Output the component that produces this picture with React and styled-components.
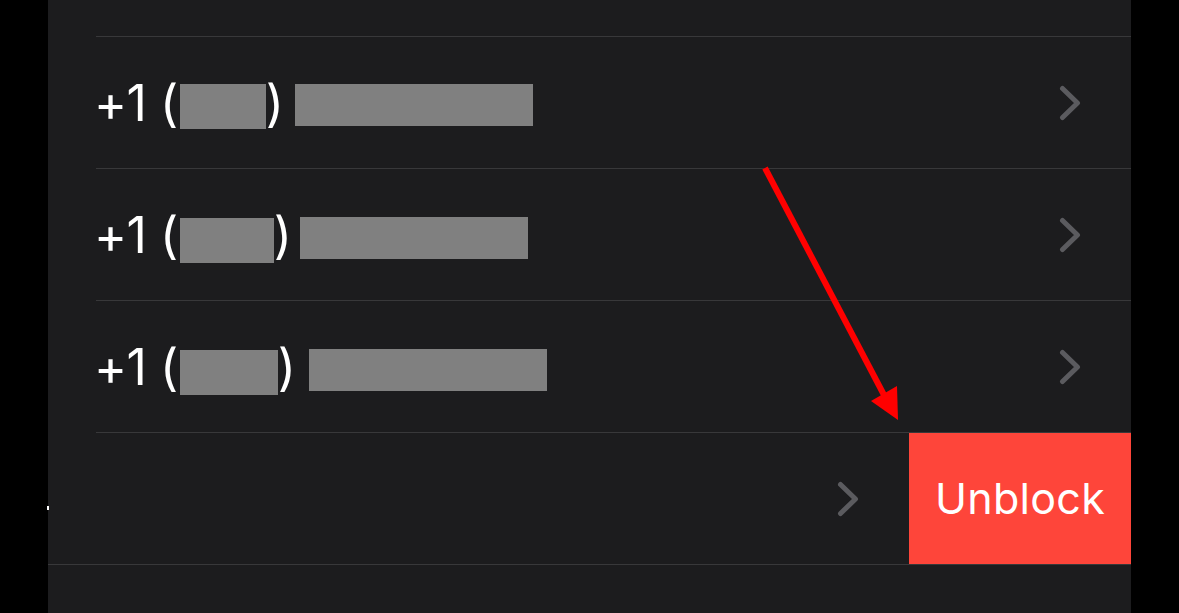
import styled, { createGlobalStyle } from 'styled-components';

const GlobalStyle = createGlobalStyle`
  html, body {
    margin: 0;
    padding: 0;
    background: #000;
  }
  body {
    font-family: Inter, "Liberation Sans", sans-serif;
    overflow: hidden;
  }
`;

const Page = styled.div`
  width: 1179px;
  height: 613px;
  background: #000;
  display: flex;
  position: relative;
  overflow: hidden;
`;

const Panel = styled.div`
  margin-left: 48px;
  width: 1083px;
  height: 100%;
  background: #1c1c1e;
  display: flex;
  flex-direction: column;
  position: relative;
`;

const TopGap = styled.div`
  height: 36px;
  flex-shrink: 0;
`;

const Row = styled.div`
  padding-left: 48px;
  flex-shrink: 0;
`;

const RowInner = styled.div`
  height: 131px;
  border-top: 1px solid #38383a;
  display: flex;
  align-items: stretch;
`;

const RowContent = styled.div`
  flex: 1;
  display: flex;
  align-items: center;
  padding-right: 50px;
  margin-left: ${(p) => (p.$shift ? `-${p.$shift}px` : '0')};
`;

const Number = styled.div`
  flex: 1;
  display: flex;
  align-items: center;
  margin-left: -2px;
  color: #fff;
  font-size: 50px;
  letter-spacing: -0.5px;
  line-height: 1;
`;

const Paren = styled.span`
  display: inline-block;
`;

const Redact = styled.span`
  display: inline-block;
  background: #808080;
  width: ${(p) => p.$w}px;
  height: ${(p) => p.$h}px;
  margin-left: ${(p) => p.$ml || 0}px;
  transform: translateY(${(p) => p.$dy || 0}px);
`;

const Chevron = styled.svg`
  width: 22px;
  height: 36px;
  flex-shrink: 0;
`;

const UnblockButton = styled.div`
  width: 222px;
  flex-shrink: 0;
  background: #fe453a;
  color: #fff;
  font-size: 43px;
  letter-spacing: 0.3px;
  display: flex;
  align-items: center;
  justify-content: center;
  padding-bottom: 2px;
`;

const EdgeDot = styled.span`
  position: absolute;
  left: -1px;
  top: 506px;
  width: 2px;
  height: 4px;
  background: #fff;
`;

const Footer = styled.div`
  border-top: 1px solid #38383a;
  flex: 1;
`;

const Arrow = styled.svg`
  position: absolute;
  left: 0;
  top: 0;
  width: 1179px;
  height: 613px;
  pointer-events: none;
`;

function ChevronIcon() {
  return (
    <Chevron viewBox="0 0 22 36">
      <path
        d="M3.5 3.5 L18.5 18 L3.5 32.5"
        fill="none"
        stroke="#5b5b5f"
        strokeWidth="5"
        strokeLinecap="round"
        strokeLinejoin="round"
      />
    </Chevron>
  );
}

const rows = [
  { a: 86, b: 238, gap: 12, dy1: 4, dy2: 2 },
  { a: 94, b: 228, gap: 9, dy1: 6, dy2: 3 },
  { a: 98, b: 238, gap: 14, dy1: 6, dy2: 3 },
];

function App() {
  return (
    <>
      <GlobalStyle />
      <Page>
        <Panel>
          <TopGap />
          {rows.map((r, i) => (
            <Row key={i}>
              <RowInner>
                <RowContent>
                  <Number>
                    +1&nbsp;
                    <Paren>(</Paren>
                    <Redact $w={r.a} $h={45} $ml={2} $dy={r.dy1} />
                    <Paren>)</Paren>
                    <Redact $w={r.b} $h={42} $ml={r.gap} $dy={r.dy2} />
                  </Number>
                  <ChevronIcon />
                </RowContent>
              </RowInner>
            </Row>
          ))}
          <Row>
            <RowInner>
              <RowContent $shift={222}>
                <Number />
                <ChevronIcon />
              </RowContent>
              <UnblockButton>Unblock</UnblockButton>
            </RowInner>
          </Row>
          <Footer />
          <EdgeDot />
        </Panel>
        <Arrow viewBox="0 0 1179 613">
          <line x1="765" y1="168" x2="884" y2="395" stroke="#ff0000" strokeWidth="6" />
          <polygon points="898,420 871,401 897,386" fill="#ff0000" />
        </Arrow>
      </Page>
    </>
  );
}

export default App;
